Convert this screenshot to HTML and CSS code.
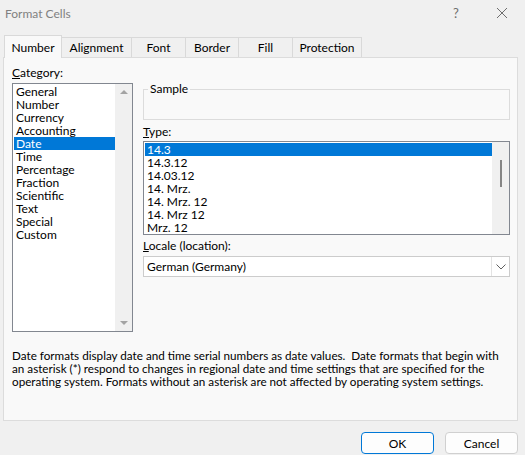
FILE: index.html
```html
<!DOCTYPE html>
<html lang="en">
<head>
    <meta charset="UTF-8">
    <meta name="viewport" content="width=device-width, initial-scale=1.0">
    <title>Format Cells</title>
    <link rel="stylesheet" href="styles.css">
</head>
<body>
    <div class="dialog">
        <div class="titlebar">
            <span class="title">Format Cells</span>
            <span class="caption-btn">?</span>
            <span class="caption-btn close">
                <svg width="12" height="12" viewBox="0 0 12 12"><path d="M1 1L11 11M11 1L1 11" stroke="#6e6e6e" stroke-width="1" fill="none"/></svg>
            </span>
        </div>

        <!-- Tab strip -->
        <div class="tabs">
            <div class="tab active tab-number">Number</div>
            <div class="tab tab-alignment">Alignment</div>
            <div class="tab tab-font">Font</div>
            <div class="tab tab-border">Border</div>
            <div class="tab tab-fill">Fill</div>
            <div class="tab tab-protection">Protection</div>
        </div>

        <div class="panel">
            <div class="columns">
                <div class="left-col">
                    <div class="label"><u>C</u>ategory:</div>
                    <div class="listbox category-list">
                        <div class="list-items">
                            <div class="item">General</div>
                            <div class="item">Number</div>
                            <div class="item">Currency</div>
                            <div class="item">Accounting</div>
                            <div class="item selected">Date</div>
                            <div class="item">Time</div>
                            <div class="item">Percentage</div>
                            <div class="item">Fraction</div>
                            <div class="item">Scientific</div>
                            <div class="item">Text</div>
                            <div class="item">Special</div>
                            <div class="item">Custom</div>
                        </div>
                        <div class="scrollbar">
                            <span class="arrow-up"></span>
                            <span class="arrow-down"></span>
                        </div>
                    </div>
                </div>

                <div class="right-col">
                    <fieldset class="sample">
                        <legend>Sample</legend>
                        <div class="sample-body"></div>
                    </fieldset>

                    <div class="label type-label"><u>T</u>ype:</div>
                    <div class="listbox type-list">
                        <div class="list-items">
                            <div class="item selected">14.3</div>
                            <div class="item">14.3.12</div>
                            <div class="item">14.03.12</div>
                            <div class="item">14. Mrz.</div>
                            <div class="item">14. Mrz. 12</div>
                            <div class="item">14. Mrz 12</div>
                            <div class="item">Mrz. 12</div>
                        </div>
                        <div class="scrollbar">
                            <span class="thumb"></span>
                        </div>
                    </div>

                    <div class="label locale-label"><u>L</u>ocale (location):</div>
                    <div class="combo">
                        <span class="combo-value">German (Germany)</span>
                        <span class="combo-btn">
                            <svg width="10" height="6" viewBox="0 0 10 6"><path d="M0.5 0.5L5 5L9.5 0.5" stroke="#606060" stroke-width="1" fill="none"/></svg>
                        </span>
                    </div>
                </div>
            </div>

            <p class="description">Date formats display date and time serial numbers as date values.&nbsp; Date formats that begin with<br>an asterisk (*) respond to changes in regional date and time settings that are specified for the<br>operating system. Formats without an asterisk are not affected by operating system settings.</p>
        </div>

        <div class="buttons">
            <button class="btn default">OK</button>
            <button class="btn">Cancel</button>
        </div>
    </div>
</body>
</html>
```

FILE: styles.css
```css
body {
    margin: 0;
    font-family: Lato, "Noto Sans", sans-serif;
    font-size: 12px;
    color: #000;
}
.dialog {
    width: 525px;
    height: 455px;
    background: #f0f0f0;
    display: flex;
    flex-direction: column;
    overflow: hidden;
}
.titlebar {
    height: 26px;
    display: flex;
    align-items: center;
    padding-left: 5px;
    color: #808080;
}
.title {
    flex: 1;
}
.caption-btn {
    width: 46px;
    text-align: center;
    font-size: 13px;
    color: #6e6e6e;
}
.caption-btn.close {
    display: flex;
    justify-content: center;
}

/* tabs */
.tabs {
    display: flex;
    align-items: flex-end;
    margin-top: 9px;
    padding-left: 4px;
    height: 23px;
    margin-bottom: -1px;
}
.tab {
    height: 20px;
    box-sizing: border-box;
    border: 1px solid #d9d9d9;
    border-left: none;
    border-bottom: none;
    background: #f0f0f0;
    display: flex;
    align-items: center;
    justify-content: center;
    margin-bottom: 1px;
}
.tab.active {
    height: 23px;
    border-left: 1px solid #d9d9d9;
    background: #f9f9f9;
    margin-bottom: 0;
    position: relative;
    z-index: 1;
}
.tab-number { width: 58px; }
.tab-alignment { width: 70px; }
.tab-font { width: 54px; }
.tab-border { width: 53px; }
.tab-fill { width: 54px; }
.tab-protection { width: 69px; }

/* main panel */
.panel {
    margin-left: 3px;
    width: 515px;
    height: 364px;
    box-sizing: border-box;
    border: 1px solid #dcdcdc;
    background: #f9f9f9;
    padding: 8px 0 0 8px;
}
.columns {
    display: flex;
    gap: 10px;
}
.label {
    line-height: 14px;
    height: 14px;
}
.left-col {
    width: 121px;
}
.listbox {
    margin-top: 3px;
    box-sizing: border-box;
    border: 1px solid #828790;
    background: #fff;
    display: flex;
    padding: 1px;
}
.category-list {
    height: 249px;
}
.list-items {
    flex: 1;
    overflow: hidden;
}
.item {
    height: 13px;
    line-height: 13px;
    padding-left: 2px;
    white-space: nowrap;
}
.item.selected {
    background: #0078d7;
    color: #fff;
}
.scrollbar {
    width: 17px;
    margin: -1px -1px -1px 0;
    background: #f0f0f0;
    display: flex;
    flex-direction: column;
    justify-content: space-between;
    align-items: center;
    padding: 6px 0;
}
.arrow-up {
    width: 0;
    height: 0;
    border-left: 4px solid transparent;
    border-right: 4px solid transparent;
    border-bottom: 4px solid #a3a3a3;
}
.arrow-down {
    width: 0;
    height: 0;
    border-left: 4px solid transparent;
    border-right: 4px solid transparent;
    border-top: 4px solid #a3a3a3;
}

.right-col {
    width: 367px;
}
.sample {
    margin: 16px 0 0 0;
    padding: 0 0 0 4px;
    border: 1px solid #dcdcdc;
}
.sample legend {
    padding: 0 2px;
    line-height: 14px;
}
.sample-body {
    height: 23px;
}
.type-label {
    margin-top: 5px;
}
.type-list {
    margin-top: 2px;
    height: 94px;
}
.type-list .scrollbar {
    justify-content: flex-start;
    padding-top: 18px;
}
.thumb {
    width: 2px;
    height: 27px;
    background: #858585;
}
.locale-label {
    margin-top: 4px;
}
.combo {
    margin-top: 3px;
    height: 21px;
    box-sizing: border-box;
    border: 1px solid #cccccc;
    background: #fff;
    display: flex;
    align-items: center;
}
.combo-value {
    flex: 1;
    padding-left: 3px;
}
.combo-btn {
    width: 17px;
    height: 19px;
    border-left: 1px solid #e3e3e3;
    display: flex;
    align-items: center;
    justify-content: center;
}

.description {
    margin: 17px 0 0 0;
    font-size: 11.7px;
    line-height: 13px;
    white-space: nowrap;
}

/* bottom buttons */
.buttons {
    display: flex;
    justify-content: flex-end;
    gap: 11px;
    padding-right: 7px;
    margin-top: 11px;
}
.btn {
    width: 73px;
    height: 22px;
    font-family: inherit;
    font-size: 12px;
    background: #fdfdfd;
    border: 1px solid #d0d0d0;
    border-radius: 4px;
    color: #000;
    padding: 0;
}
.btn.default {
    border-color: #0078d7;
}
```
